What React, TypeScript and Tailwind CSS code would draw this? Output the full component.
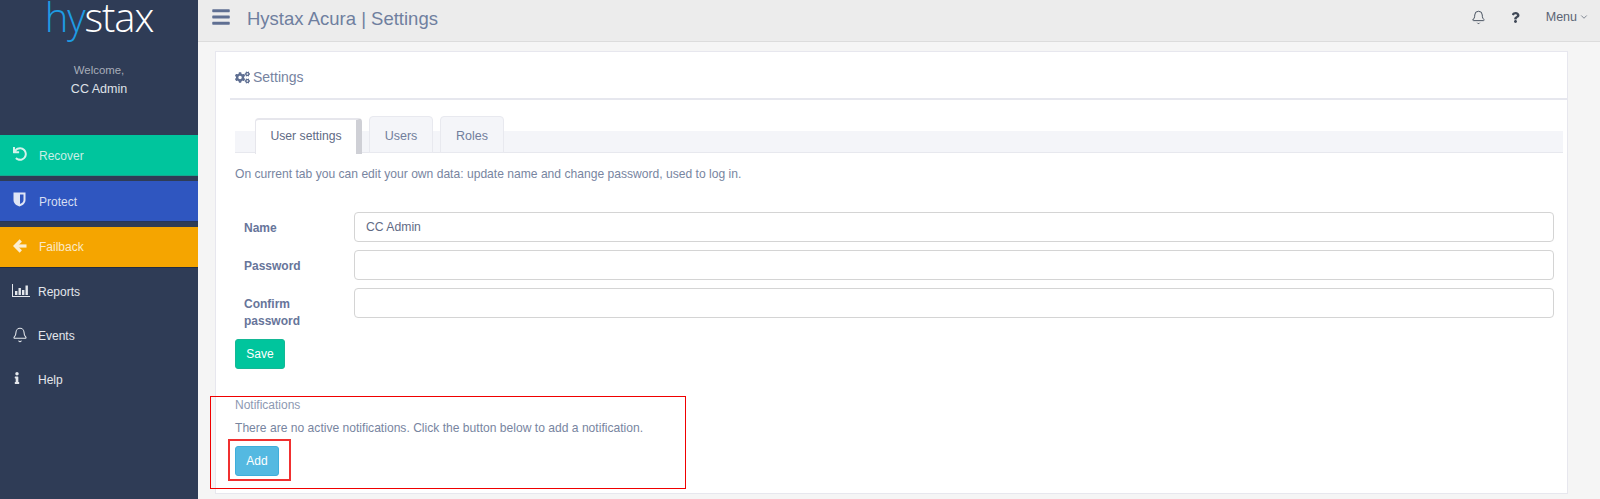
import { FaBars, FaCogs, FaQuestion, FaInfo, FaUndo } from "react-icons/fa"
import { Bell, ChevronDown } from "lucide-react"

function ArrowIcon() {
  return (
    <svg width="14" height="14" viewBox="0 0 14 14" fill="none" stroke="currentColor" strokeWidth="3.2">
      <path d="M13.5 7 H3" />
      <path d="M7.8 1.5 L2.2 7 L7.8 12.5" />
    </svg>
  )
}

function ShieldIcon() {
  return (
    <svg width="13" height="15" viewBox="0 0 13 15">
      <path fillRule="evenodd" fill="currentColor" d="M0.5 0.5 H12.5 V8 C12.5 11.5 9.5 13.5 6.5 14.5 C3.5 13.5 0.5 11.5 0.5 8 Z M7 2.5 V12 C9 11.2 10.5 10 10.5 8 V2.5 Z" />
    </svg>
  )
}

function ChartIcon() {
  return (
    <svg width="18" height="13" viewBox="0 0 18 13" fill="currentColor">
      <path d="M0 0 H1 V12 H18 V13 H0 Z" />
      <rect x="3" y="7" width="2.4" height="4" />
      <rect x="6.5" y="4" width="2.4" height="7" />
      <rect x="10" y="6" width="2.4" height="5" />
      <rect x="13.5" y="1.5" width="2.4" height="9.5" />
    </svg>
  )
}

const coloured = [
  { label: "Recover", icon: <FaUndo className="text-[14px]" />, bg: "bg-[#00c59d]", edge: "border-[#16a88e]", iconText: "text-[#d5f3ec]", text: "pt-[1px] text-[#c9efe6]" },
  { label: "Protect", icon: <ShieldIcon />, bg: "bg-[#2f56c0]", edge: "border-[#26355a]", iconText: "text-[#dfe5f5]", text: "pt-[1px] text-[#d6def2]" },
  { label: "Failback", icon: <ArrowIcon />, bg: "bg-[#f5a500]", edge: "border-[#222c40]", iconText: "text-[#fbeed2]", text: "text-[#fbe9c6]" },
]

const plain = [
  { label: "Reports", icon: <ChartIcon /> },
  { label: "Events", icon: <Bell size={16} strokeWidth={1.6} /> },
  { label: "Help", icon: <FaInfo className="text-[12px] -ml-[1px] -mt-[2px]" /> },
]

function Sidebar() {
  return (
    <aside className="w-[198px] shrink-0 bg-[#2f3c56] h-full">
      <div className="h-[46px] flex justify-center">
        <div className="text-[40px] leading-[34px] tracking-[-1.1px] font-light font-['Open_Sans',sans-serif] text-white">
          <span className="text-[#1e9be4]">hy</span>stax
        </div>
      </div>
      <div className="text-center text-[11.4px] leading-[19px] pt-[15px] text-[#a7adb9]">Welcome,</div>
      <div className="text-center text-[12.5px] leading-[19px] text-[#dfe2e8]">CC Admin</div>
      <div className="pt-[36px] flex flex-col gap-[5px]">
        {coloured.map((item) => (
          <div key={item.label} className={`h-[41px] flex items-center pl-[13px] border-b ${item.bg} ${item.edge}`}>
            <span className={`w-[26px] -mt-[3px] ${item.iconText}`}>{item.icon}</span>
            <span className={`text-[12px] ${item.text}`}>{item.label}</span>
          </div>
        ))}
      </div>
      <div className="pt-[2px]">
        {plain.map((item) => (
          <div key={item.label} className="h-[44px] flex items-center pl-[12px] text-[#e4e7ec]">
            <span className="w-[26px] -mt-[3px]">{item.icon}</span>
            <span className="text-[12px]">{item.label}</span>
          </div>
        ))}
      </div>
    </aside>
  )
}

function Header() {
  return (
    <header className="h-[42px] shrink-0 bg-[#ececec] border-b border-[#dcdcdc] flex items-center pl-[13px] pr-[11px]">
      <FaBars className="text-[20px] text-[#5f6f92] mr-[16px] -mt-[7px]" />
      <h1 className="text-[18.5px] text-[#6f7f9f] -mt-[3px] font-normal">Hystax Acura | Settings</h1>
      <div className="ml-auto flex items-center text-[#5a6475] -mt-[7px]">
        <Bell size={15} strokeWidth={1.6} className="mr-[24px] text-[#4b5563]" />
        <FaQuestion className="text-[11px] mr-[25px] text-[#3f4856]" />
        <span className="text-[12.5px]">Menu</span>
        <ChevronDown size={10} strokeWidth={1.8} className="ml-[2px]" />
      </div>
    </header>
  )
}

function Field({ label, value }: { label: string; value?: string }) {
  return (
    <div className="flex">
      <label className="w-[119px] shrink-0 pl-[9px] pr-[30px] pt-[8px] text-[12px] leading-[17px] font-bold text-[#67759a]">{label}</label>
      <input
        readOnly
        value={value ?? ""}
        className="h-[30px] flex-1 rounded-[4px] border border-[#d4d4d4] px-[11px] text-[12.2px] text-[#5f6b85] outline-none"
      />
    </div>
  )
}

export default function App() {
  return (
    <div className="relative h-[499px] flex overflow-hidden bg-[#f5f5f5] font-['Liberation_Sans',Arial,sans-serif]">
      <Sidebar />
      <main className="flex-1 flex flex-col min-w-0">
        <Header />
        <div className="pl-[17px] pr-[32px] pt-[9px]">
          <section className="h-[443px] bg-white border border-[#e7e7ee] pl-[14px]">
            <div className="h-[48px] pt-[5px] border-b-2 border-[#e6e7ee] flex items-center pl-[5px] text-[14px] text-[#76839f]">
              <FaCogs className="text-[15px] mr-[3px] text-[#5f6f92]" />
              Settings
            </div>

            <div className="pl-[5px] pr-[4px]">
              <div className="relative mt-[16px] h-[37px]">
                <div className="absolute left-0 right-0 top-[15px] h-[22px] bg-[#f4f5f9] border-b border-[#e7e8ee]" />
                <div className="relative flex items-start pl-[20px] gap-[7px]">
                  <div className="h-[36px] pb-[1px] mt-[2px] w-[107px] bg-white border-t-2 border-l border-[#e6e6ec] border-r-[6px] border-r-[#cfd0d6] rounded-t-[4px] flex items-center justify-center text-[12.2px] text-[#5f6b85]">
                    User settings
                  </div>
                  <div className="h-[37px] pt-[4px] w-[64px] bg-[#f4f5f9] border border-[#e8e9ef] rounded-t-[4px] flex items-center justify-center text-[12.5px] text-[#717e9c]">
                    Users
                  </div>
                  <div className="h-[37px] pt-[4px] w-[64px] bg-[#f4f5f9] border border-[#e8e9ef] rounded-t-[4px] flex items-center justify-center text-[12.5px] text-[#717e9c]">
                    Roles
                  </div>
                </div>
              </div>

              <p className="text-[12.1px] leading-[18px] mt-[12px] text-[#78859f]">
                On current tab you can edit your own data: update name and change password, used to log in.
              </p>

              <div className="mt-[29px] pr-[9px] flex flex-col gap-[8px]">
                <Field label="Name" value="CC Admin" />
                <Field label="Password" />
                <Field label="Confirm password" />
              </div>

              <button className="mt-[9px] block h-[30px] w-[50px] rounded-[3px] bg-[#00c59d] border border-[#14b895] text-white text-[12px]">
                Save
              </button>

              <div className="mt-[28px] text-[12px] leading-[16px] text-[#8d99b2]">Notifications</div>
              <p className="mt-[7px] text-[12.1px] leading-[16px] text-[#78859f]">
                There are no active notifications. Click the button below to add a notification.
              </p>
              <button className="mt-[10px] block h-[30px] w-[44px] rounded-[3px] bg-[#54b9e1] border border-[#3eaedb] text-white text-[12px]">
                Add
              </button>
            </div>
          </section>
        </div>
      </main>

      {/* red annotation boxes drawn over the screenshot */}
      <div className="absolute left-[210px] top-[396px] w-[476px] h-[93px] border border-[#f00000]" />
      <div className="absolute left-[228px] top-[439px] w-[63px] h-[42px] border-2 border-[#f03030]" />
    </div>
  )
}
